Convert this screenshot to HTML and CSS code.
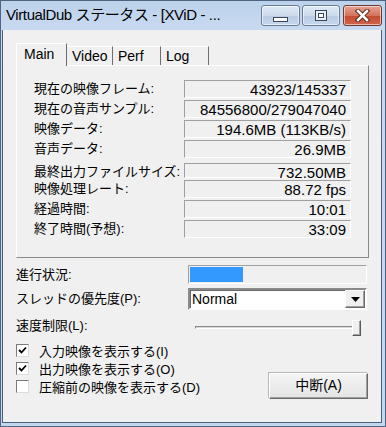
FILE: index.html
```html
<html>
  <head>
    <link rel="stylesheet" href="styles.css">
  </head>
  <body>
    <div class="window">
      <div class="titlebar">
        <span class="title">VirtualDub ステータス - [XViD - ...</span>
        <div class="caption-buttons">
          <div class="cap cap-min"><span class="glyph-min"></span></div>
          <div class="cap cap-max"><span class="glyph-max"><span class="glyph-max-inner"></span></span></div>
          <div class="cap cap-close">
            <svg width="15" height="13" viewBox="0 0 15 13">
              <path d="M3 2 L12 11 M12 2 L3 11" stroke="#5a2a22" stroke-width="4.5" stroke-linecap="square" fill="none" />
              <path d="M3 2 L12 11 M12 2 L3 11" stroke="#fff" stroke-width="2.5" stroke-linecap="square" fill="none" />
            </svg>
          </div>
        </div>
      </div>

      <div class="client">
        <ul class="tabs">
          <li class="tab tab-active">Main</li>
          <li class="tab tab-video">Video</li>
          <li class="tab tab-perf">Perf</li>
          <li class="tab tab-log">Log</li>
        </ul>

        <div class="tab-page">
          <div class="stats">
            <span class="stat-label">現在の映像フレーム:</span>
            <span class="stat-value">43923/145337</span>
            <span class="stat-label">現在の音声サンプル:</span>
            <span class="stat-value">84556800/279047040</span>
            <span class="stat-label">映像データ:</span>
            <span class="stat-value">194.6MB (113KB/s)</span>
            <span class="stat-label">音声データ:</span>
            <span class="stat-value">26.9MB</span>
            <span class="stat-label group-start">最終出力ファイルサイズ:</span>
            <span class="stat-value group-start">732.50MB</span>
            <span class="stat-label">映像処理レート:</span>
            <span class="stat-value">88.72 fps</span>
            <span class="stat-label">経過時間:</span>
            <span class="stat-value">10:01</span>
            <span class="stat-label">終了時間(予想):</span>
            <span class="stat-value">33:09</span>
          </div>
        </div>

        <div class="controls">
          <span class="ctl-label row-progress">進行状況:</span>
          <div class="progress row-progress"><div class="progress-fill" style="width: 30.2%"></div></div>

          <span class="ctl-label row-combo">スレッドの優先度(P):</span>
          <div class="combo row-combo">
            <span class="combo-text">Normal</span>
            <span class="combo-button">
              <svg width="9" height="5" viewBox="0 0 9 5"><path d="M0 0 H9 L4.5 5 Z" fill="#000" /></svg>
            </span>
          </div>

          <span class="ctl-label row-slider slider-label">速度制限(L):</span>
          <div class="slider row-slider">
            <div class="slider-track"></div>
            <div class="slider-thumb"></div>
          </div>
        </div>

        <div class="bottom">
          <div class="checks">
            <label class="check">
              <span class="check-box">
                <svg width="9" height="9" viewBox="0 0 9 9"><path d="M1 4 L3.5 6.5 L8 1.5" stroke="#000" stroke-width="1.8" fill="none" /></svg>
              </span>
              入力映像を表示する(I)
            </label>
            <label class="check">
              <span class="check-box">
                <svg width="9" height="9" viewBox="0 0 9 9"><path d="M1 4 L3.5 6.5 L8 1.5" stroke="#000" stroke-width="1.8" fill="none" /></svg>
              </span>
              出力映像を表示する(O)
            </label>
            <label class="check check-clipped">
              <span class="check-box"></span>
              圧縮前の映像を表示する(D)
            </label>
          </div>
          <div class="push-button">中断(A)</div>
        </div>
      </div>
    </div>
  </body>
</html>
```

FILE: styles.css
```css
html,
body,
ul {
  margin: 0;
  padding: 0;
}
ul {
  list-style-type: none;
}
body {
  width: 386px;
  height: 427px;
  overflow: hidden;
  font-family: "Liberation Sans", "Noto Sans CJK JP", sans-serif;
  font-size: 13px;
  color: #000;
  background: #c3d6ed;
}
.window {
  box-sizing: border-box;
  width: 386px;
  height: 427px;
  border: 1px solid #4e6482;
  background: linear-gradient(#bcd2eb, #c8daf0 30px, #c3d7ee);
  display: flex;
  flex-direction: column;
}
.titlebar {
  height: 29px;
  flex: none;
  display: flex;
  align-items: flex-start;
}
.title {
  flex: 1;
  padding-left: 5px;
  line-height: 27px;
  font-size: 15px;
  letter-spacing: -0.4px;
  white-space: nowrap;
  overflow: hidden;
}
.caption-buttons {
  display: flex;
  margin-top: 4px;
  margin-right: 3px;
}
.cap {
  box-sizing: border-box;
  height: 21px;
  border: 1px solid #6a7d98;
  border-radius: 3px;
  display: flex;
  align-items: center;
  justify-content: center;
  box-shadow: inset 0 0 0 1px rgba(255, 255, 255, 0.55);
}
.cap-min {
  width: 39px;
  margin-right: 2px;
  background: linear-gradient(#e0eaf6, #cbdaec 50%, #b9cce3 51%, #c6d7ec);
}
.cap-max {
  width: 38px;
  margin-right: 3px;
  background: linear-gradient(#e0eaf6, #cbdaec 50%, #b9cce3 51%, #c6d7ec);
}
.cap-close {
  width: 39px;
  border-color: #6e3a30;
  background: linear-gradient(#e6a393, #d5735c 50%, #c24a30 51%, #d0654c);
}
.glyph-min {
  box-sizing: border-box;
  width: 15px;
  height: 5px;
  margin-top: 7px;
  background: #fff;
  border: 1px solid #3b4656;
}
.glyph-max {
  box-sizing: border-box;
  width: 12px;
  height: 11px;
  border: 1px solid #3b4656;
  background: #e8eef6;
  display: flex;
  align-items: center;
  justify-content: center;
}
.glyph-max-inner {
  box-sizing: border-box;
  width: 6px;
  height: 5px;
  border: 1px solid #3b4656;
  background: #fff;
}

.client {
  flex: 1;
  margin: 0 3px 3px 1px;
  border: 1px solid #4b5f7c;
  border-top: none;
  background: #f0f0f0;
  padding: 13px 12px 0 13px;
}

.tabs {
  display: flex;
  align-items: flex-end;
  height: 22px;
  position: relative;
  z-index: 1;
}
.tab {
  box-sizing: border-box;
  height: 19px;
  padding-left: 5px;
  line-height: 18px;
  font-size: 14px;
  border-top: 1px solid #fff;
  border-left: 1px solid #fff;
  border-right: 1px solid #6d6d6d;
  background: #f0f0f0;
}
.tab-active {
  width: 51px;
  height: 23px;
  margin-bottom: -1px;
  padding-left: 7px;
  line-height: 20px;
}
.tab-video {
  width: 46px;
  border-left: none;
}
.tab-perf {
  width: 48px;
  border-left: none;
}
.tab-log {
  width: 48px;
  border-left: none;
}

.tab-page {
  border-top: 1px solid #fff;
  border-left: 1px solid #fff;
  border-right: 1px solid #8a8a8a;
  border-bottom: 1px solid #8a8a8a;
  padding: 14px 17px 19px 17px;
}
.stats {
  display: grid;
  grid-template-columns: 1fr 167px;
  grid-auto-rows: 18px;
  row-gap: 2px;
}
.stat-label {
  line-height: 18px;
  white-space: nowrap;
}
.stat-value {
  box-sizing: border-box;
  border-top: 1px solid #a0a0a0;
  border-left: 1px solid #a0a0a0;
  border-right: 1px solid #fff;
  border-bottom: 1px solid #fff;
  padding-right: 4px;
  text-align: right;
  font-size: 15px;
  line-height: 17px;
}
.group-start {
  margin-top: 3px;
}

.controls {
  display: grid;
  grid-template-columns: 172px 179px;
  grid-template-rows: 19px 22px 21px;
  margin-top: 7px;
  row-gap: 4px;
}
.ctl-label {
  align-self: center;
  line-height: 18px;
  white-space: nowrap;
}
.row-slider {
  margin-top: 6px;
}
.slider-label {
  align-self: end;
}
.progress {
  box-sizing: border-box;
  border-top: 1px solid #a0a0a0;
  border-left: 1px solid #a0a0a0;
  border-right: 1px solid #fff;
  border-bottom: 1px solid #fff;
  padding: 1px;
  background: #f0f0f0;
}
.progress-fill {
  height: 100%;
  background: #3399ff;
}
.combo {
  box-sizing: border-box;
  display: flex;
  align-items: center;
  border-top: 2px solid #8a8a8a;
  border-left: 2px solid #8a8a8a;
  border-right: 2px solid #fff;
  border-bottom: 2px solid #fff;
  box-shadow: inset 1px 1px 0 #6a6a6a;
  background: #fff;
}
.combo-text {
  flex: 1;
  padding-left: 2px;
  font-size: 14px;
}
.combo-button {
  box-sizing: border-box;
  width: 20px;
  height: 18px;
  display: flex;
  align-items: center;
  justify-content: center;
  background: #f0f0f0;
  border-top: 1px solid #fff;
  border-left: 1px solid #fff;
  border-right: 1px solid #6a6a6a;
  border-bottom: 1px solid #6a6a6a;
  box-shadow: inset -1px -1px 0 #a0a0a0;
}
.slider {
  position: relative;
  margin-left: 7px;
  width: 166px;
  height: 16px;
}
.slider-track {
  margin-top: 6px;
  width: 161px;
  height: 3px;
  box-sizing: border-box;
  border-top: 1px solid #8a8a8a;
  border-left: 1px solid #8a8a8a;
  border-bottom: 1px solid #fff;
  background: #d8d8d8;
}
.slider-thumb {
  position: absolute;
  top: 0;
  right: 0;
  box-sizing: border-box;
  width: 9px;
  height: 16px;
  background: #f0f0f0;
  border-top: 1px solid #fff;
  border-left: 1px solid #fff;
  border-right: 1px solid #5a5a5a;
  border-bottom: 1px solid #5a5a5a;
  box-shadow: inset -1px -1px 0 #a0a0a0;
}

.bottom {
  display: flex;
  justify-content: space-between;
  align-items: flex-start;
  margin-top: 6px;
  padding-right: 1px;
}
.checks {
  display: flex;
  flex-direction: column;
}
.check {
  display: flex;
  align-items: center;
  height: 18px;
  width: 195px;
  white-space: nowrap;
  overflow: hidden;
}
.check-box {
  box-sizing: border-box;
  flex: none;
  width: 13px;
  height: 13px;
  margin-right: 10px;
  border-top: 1px solid #7a7a7a;
  border-left: 1px solid #7a7a7a;
  border-right: 1px solid #dcdcdc;
  border-bottom: 1px solid #dcdcdc;
  background: #fff;
  display: flex;
  align-items: center;
  justify-content: center;
}
.push-button {
  box-sizing: border-box;
  width: 99px;
  height: 26px;
  margin-top: 32px;
  text-align: center;
  line-height: 23px;
  font-size: 14px;
  background: linear-gradient(#f4f4f4, #e4e4e4);
  border-top: 1px solid #fff;
  border-left: 1px solid #fff;
  border-right: 1px solid #6a6a6a;
  border-bottom: 1px solid #6a6a6a;
  box-shadow: inset -1px -1px 0 #a0a0a0, -1px -1px 0 #b8b8b8;
}
```
